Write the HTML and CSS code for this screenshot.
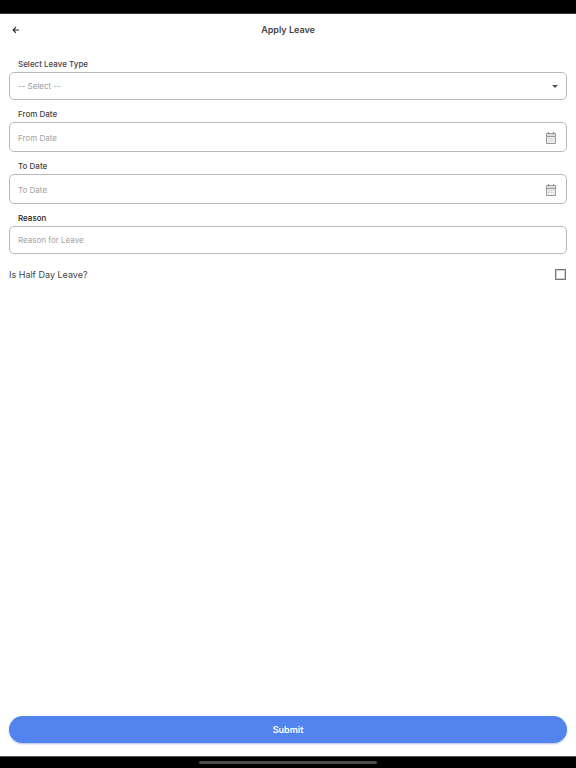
FILE: index.html
```html
<!DOCTYPE html>
<html lang="en">
<head>
    <meta charset="UTF-8">
    <meta name="viewport" content="width=device-width, initial-scale=1.0">
    <title>Apply Leave</title>
    <link rel="stylesheet" href="styles.css">
</head>
<body>
    <div class="status-bar"></div>
    <header class="header">
        <button class="back" type="button" aria-label="Back">
            <svg viewBox="0 0 8 8" width="8" height="8"><path d="M7 4H1.2M3.9 1.2L1.1 4l2.8 2.8" fill="none" stroke="#222" stroke-width="1.1"/></svg>
        </button>
        <h1>Apply Leave</h1>
    </header>
    <form class="leave-form">
        <div class="field">
            <label for="leave-type">Select Leave Type</label>
            <div class="control">
                <select id="leave-type">
                    <option>-- Select --</option>
                </select>
                <svg class="arrow" viewBox="0 0 6 3" width="6" height="3"><path d="M0 0h6L3 3z" fill="#555"/></svg>
            </div>
        </div>
        <div class="field">
            <label for="from-date">From Date</label>
            <div class="control date">
                <input id="from-date" type="text" placeholder="From Date">
                <svg class="calendar" viewBox="0 0 12 12" width="12" height="12">
                    <path d="M1.5 1.5h9v10h-9z" fill="#efefef" stroke="#999"/>
                    <path d="M2 2h8v2H2z" fill="#ddd"/>
                    <path d="M2 4.5h8" fill="none" stroke="#999"/>
                    <path d="M3.5 0v2M8.5 0v2" fill="none" stroke="#888"/>
                    <path d="M3 6.5h6M3 8.5h6" fill="none" stroke="#ccc" stroke-dasharray="1 .6"/>
                </svg>
            </div>
        </div>
        <div class="field">
            <label for="to-date">To Date</label>
            <div class="control date">
                <input id="to-date" type="text" placeholder="To Date">
                <svg class="calendar" viewBox="0 0 12 12" width="12" height="12">
                    <path d="M1.5 1.5h9v10h-9z" fill="#efefef" stroke="#999"/>
                    <path d="M2 2h8v2H2z" fill="#ddd"/>
                    <path d="M2 4.5h8" fill="none" stroke="#999"/>
                    <path d="M3.5 0v2M8.5 0v2" fill="none" stroke="#888"/>
                    <path d="M3 6.5h6M3 8.5h6" fill="none" stroke="#ccc" stroke-dasharray="1 .6"/>
                </svg>
            </div>
        </div>
        <div class="field">
            <label class="dark" for="reason">Reason</label>
            <div class="control">
                <input id="reason" type="text" placeholder="Reason for Leave">
            </div>
        </div>
        <div class="half-day">
            <label for="half-day">Is Half Day Leave?</label>
            <input id="half-day" type="checkbox">
        </div>
        <button class="submit" type="submit">Submit</button>
    </form>
    <footer class="home-bar"><span class="home-indicator"></span></footer>
</body>
</html>
```

FILE: styles.css
```css
* {
    box-sizing: border-box;
}
body {
    margin: 0;
    min-height: 100vh;
    display: flex;
    flex-direction: column;
    background: #fff;
    color: #444;
    font-family: Inter, "Liberation Sans", sans-serif;
    font-size: 8px;
}
button, input, select {
    font-family: inherit;
    font-size: inherit;
}
.status-bar {
    height: 14px;
    background: #000;
    border-bottom: 1px solid #333;
}
.header {
    display: grid;
    grid-template-columns: 24px 1fr 24px;
    align-items: center;
    height: 32px;
    padding: 0 4px;
}
.header h1 {
    margin: 0;
    font-size: 9px;
    line-height: 12px;
    font-weight: 600;
    text-align: center;
}
.back {
    display: flex;
    align-items: center;
    justify-content: center;
    height: 24px;
    padding: 0;
    border: 0;
    background: none;
}
.leave-form {
    flex: 1;
    display: flex;
    flex-direction: column;
    gap: 8px;
    padding: 12px 9px 13px;
}
.field {
    display: flex;
    flex-direction: column;
    gap: 2px;
}
.field label {
    padding-left: 9px;
    line-height: 12px;
    font-weight: 500;
}
.field .dark {
    color: #222;
}
.control {
    display: flex;
    align-items: center;
    height: 28px;
    padding: 0 8px;
    border: 1px solid #b8b8b8;
    border-radius: 5px;
}
.control.date {
    height: 30px;
    padding: 2px 9px 0 8px;
}
.control input, .control select {
    flex: 1;
    min-width: 0;
    padding: 0;
    border: 0;
    outline: 0;
    background: none;
    color: #999;
    appearance: none;
}
.control input::placeholder {
    color: #a2a2a2;
}
.half-day {
    display: flex;
    align-items: center;
    justify-content: space-between;
    height: 24px;
    font-size: 9px;
}
.half-day input {
    appearance: none;
    width: 11px;
    height: 11px;
    margin: 0 1px;
    border: 1px solid #777;
    box-shadow: inset 0 0 0 1px #ccc;
    background: #fff;
}
.submit {
    height: 27px;
    margin-top: auto;
    border: 0;
    border-radius: 14px;
    background: #5383ec;
    box-shadow: 0 1px 2px #a9bfe9;
    color: #fff;
    font-size: 9px;
    font-weight: 600;
}
.home-bar {
    display: flex;
    align-items: center;
    justify-content: center;
    height: 12px;
    background: #000;
    border-top: 1px solid #555;
}
.home-indicator {
    width: 31%;
    height: 3px;
    border-radius: 2px;
    background: #4c4c4c;
}
```
